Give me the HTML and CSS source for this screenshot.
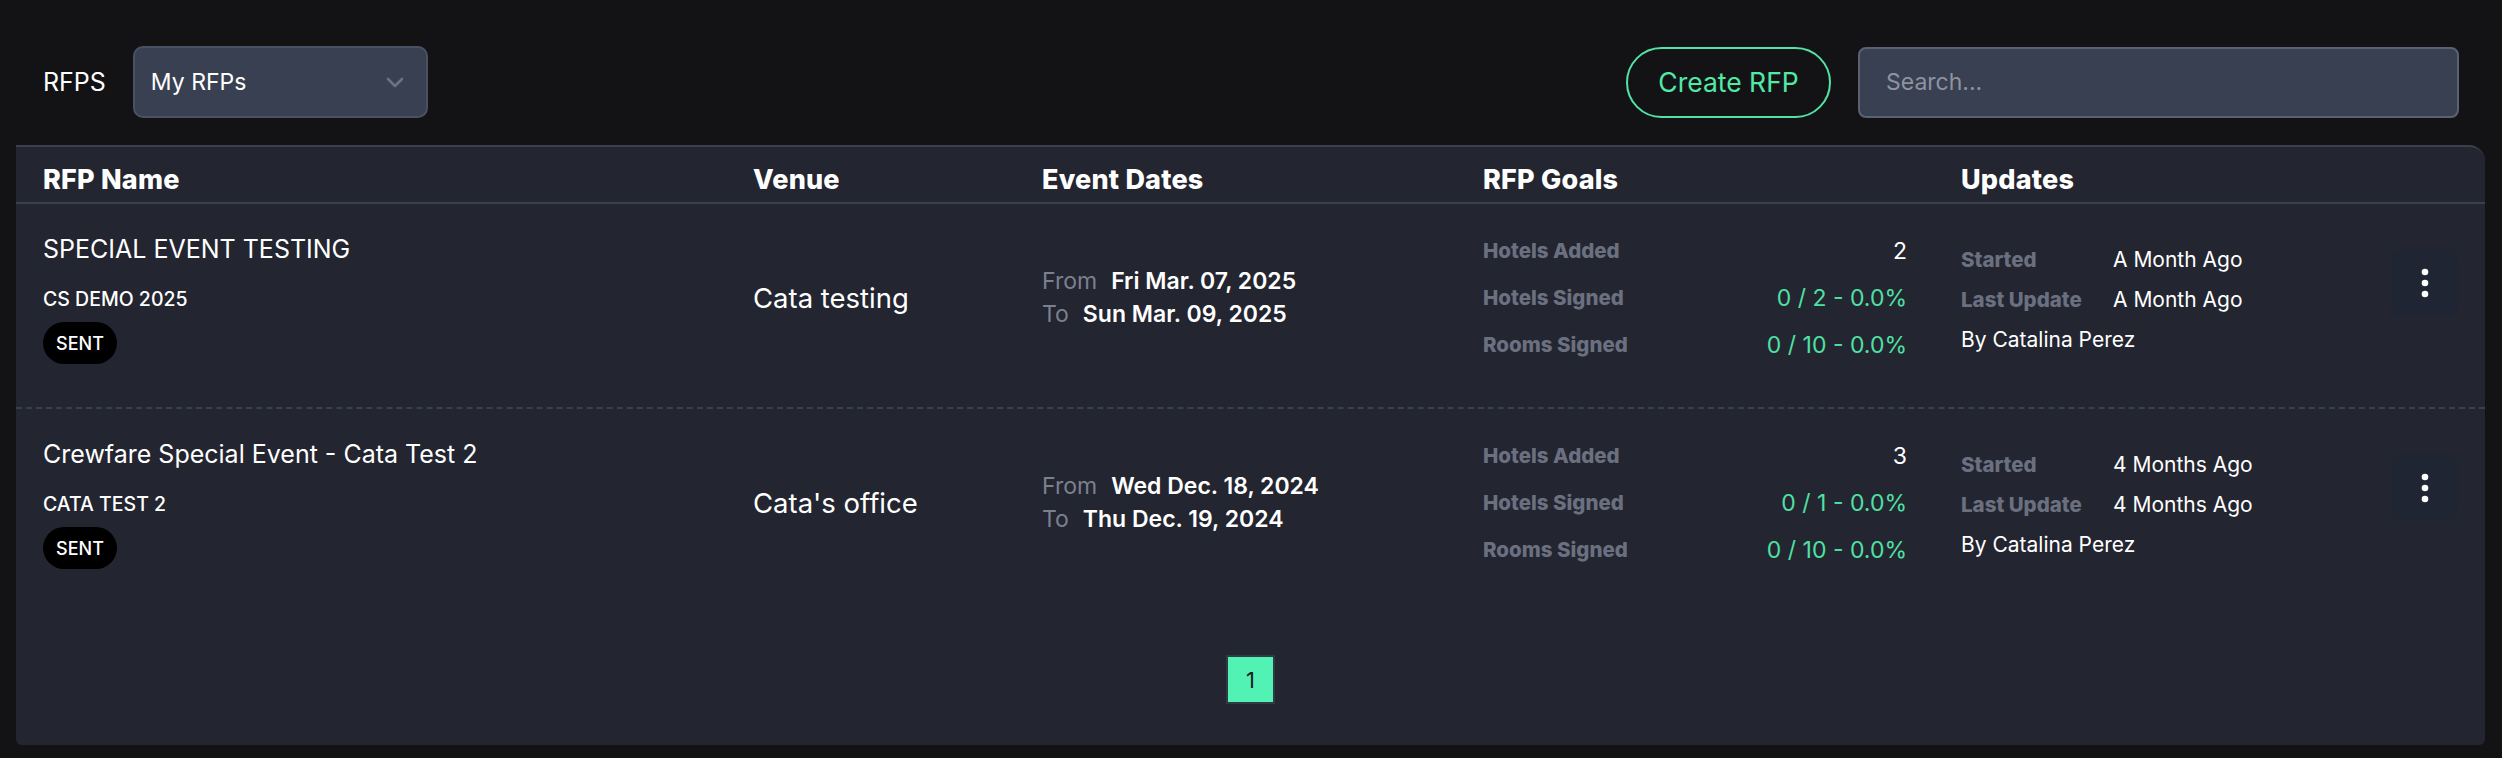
FILE: index.html
```html
<!DOCTYPE html>
<html lang="en">
<head>
    <meta charset="UTF-8">
    <meta name="viewport" content="width=device-width, initial-scale=1.0">
    <title>RFPs</title>
    <link rel="stylesheet" href="styles.css">
</head>
<body>
    <div class="page">
        <div class="toolbar">
            <div class="toolbar-left">
                <span class="toolbar-title">RFPS</span>
                <div class="select">
                    <span>My RFPs</span>
                    <svg class="chevron" width="18" height="11" viewBox="0 0 18 11">
                        <path d="M2 2 L9 9 L16 2" fill="none" stroke="#6b7280" stroke-width="2.6" stroke-linecap="round" stroke-linejoin="round"/>
                    </svg>
                </div>
            </div>
            <div class="toolbar-right">
                <button class="create-button">Create RFP</button>
                <input class="search" type="text" placeholder="Search...">
            </div>
        </div>

        <div class="table-card">
            <div class="table-head">
                <div>RFP Name</div>
                <div>Venue</div>
                <div>Event Dates</div>
                <div>RFP Goals</div>
                <div>Updates</div>
                <div></div>
            </div>

            <div class="table-body">
                <div class="table-row">
                    <div class="rfp-name">
                        <div class="rfp-title">SPECIAL EVENT TESTING</div>
                        <div class="rfp-code">CS DEMO 2025</div>
                        <span class="status-badge">SENT</span>
                    </div>
                    <div class="venue">Cata testing</div>
                    <div class="dates">
                        <div><span class="date-label">From</span><span class="date-value">Fri Mar. 07, 2025</span></div>
                        <div><span class="date-label">To</span><span class="date-value">Sun Mar. 09, 2025</span></div>
                    </div>
                    <div class="goals">
                        <div class="goal"><span class="goal-label">Hotels Added</span><span class="goal-value">2</span></div>
                        <div class="goal"><span class="goal-label">Hotels Signed</span><span class="goal-value green">0 / 2 - 0.0%</span></div>
                        <div class="goal"><span class="goal-label">Rooms Signed</span><span class="goal-value green">0 / 10 - 0.0%</span></div>
                    </div>
                    <div class="updates">
                        <span class="update-label">Started</span><span>A Month Ago</span>
                        <span class="update-label">Last Update</span><span>A Month Ago</span>
                        <span class="update-by">By Catalina Perez</span>
                    </div>
                    <button class="menu-button">
                        <svg width="10" height="30" viewBox="0 0 10 30">
                            <circle cx="5" cy="4" r="3.3" fill="#fff"/>
                            <circle cx="5" cy="15" r="3.3" fill="#fff"/>
                            <circle cx="5" cy="26" r="3.3" fill="#fff"/>
                        </svg>
                    </button>
                </div>

                <div class="table-row">
                    <div class="rfp-name">
                        <div class="rfp-title">Crewfare Special Event - Cata Test 2</div>
                        <div class="rfp-code">CATA TEST 2</div>
                        <span class="status-badge">SENT</span>
                    </div>
                    <div class="venue">Cata's office</div>
                    <div class="dates">
                        <div><span class="date-label">From</span><span class="date-value">Wed Dec. 18, 2024</span></div>
                        <div><span class="date-label">To</span><span class="date-value">Thu Dec. 19, 2024</span></div>
                    </div>
                    <div class="goals">
                        <div class="goal"><span class="goal-label">Hotels Added</span><span class="goal-value">3</span></div>
                        <div class="goal"><span class="goal-label">Hotels Signed</span><span class="goal-value green">0 / 1 - 0.0%</span></div>
                        <div class="goal"><span class="goal-label">Rooms Signed</span><span class="goal-value green">0 / 10 - 0.0%</span></div>
                    </div>
                    <div class="updates">
                        <span class="update-label">Started</span><span>4 Months Ago</span>
                        <span class="update-label">Last Update</span><span>4 Months Ago</span>
                        <span class="update-by">By Catalina Perez</span>
                    </div>
                    <button class="menu-button">
                        <svg width="10" height="30" viewBox="0 0 10 30">
                            <circle cx="5" cy="4" r="3.3" fill="#fff"/>
                            <circle cx="5" cy="15" r="3.3" fill="#fff"/>
                            <circle cx="5" cy="26" r="3.3" fill="#fff"/>
                        </svg>
                    </button>
                </div>
            </div>

            <div class="pagination">
                <span class="page-item active">1</span>
            </div>
        </div>
    </div>
</body>
</html>
```

FILE: styles.css
```css
* {
    margin: 0;
    padding: 0;
    box-sizing: border-box;
    font-family: 'Inter', 'Liberation Sans', sans-serif;
}

body {
    background-color: #131316;
    color: #fff;
    width: 2502px;
    height: 758px;
    overflow: hidden;
}

.page {
    padding: 46px 17px 0 16px;
}

/* top bar */
.toolbar {
    display: flex;
    justify-content: space-between;
    align-items: center;
    height: 72px;
    padding: 0 26px 0 27px;
    margin-bottom: 27px;
}

.toolbar-left,
.toolbar-right {
    display: flex;
    align-items: center;
}

.toolbar-left {
    gap: 27px;
}

.toolbar-right {
    gap: 27px;
}

.toolbar-title {
    font-size: 25px;
}

.select {
    width: 295px;
    height: 72px;
    display: flex;
    align-items: center;
    justify-content: space-between;
    padding: 0 22px 0 16px;
    background-color: #394051;
    border: 2px solid #4a5162;
    border-radius: 10px;
    font-size: 23px;
}

.create-button {
    width: 205px;
    height: 71px;
    background: transparent;
    border: 2px solid #52e3a4;
    border-radius: 36px;
    color: #52e8a8;
    font-size: 26.5px;
    cursor: pointer;
}

.search {
    width: 601px;
    height: 71px;
    padding: 0 26px;
    background-color: #394051;
    border: 2px solid #5a6172;
    border-radius: 8px;
    color: #fff;
    font-size: 23px;
}

.search::placeholder {
    color: #8d93a0;
}

.search:focus {
    outline: none;
}

/* table */
.table-card {
    background-color: #232530;
    border-top: 2px solid #3b404d;
    border-radius: 0 16px 6px 6px;
    height: 600px;
    padding: 0 27px;
}

.table-head,
.table-row {
    display: grid;
    grid-template-columns: 710px 289px 441px 478px 1fr 67px;
}

.table-head {
    height: 57px;
    align-items: center;
    border-bottom: 2px solid #3b404d;
    margin: 0 -27px;
    padding: 10px 27px 0;
    font-size: 27px;
    font-weight: 800;
    letter-spacing: 0.2px;
}

.table-row {
    align-items: center;
    padding: 27px 27px 43px;
    margin: 0 -27px;
    border-bottom: 2px dashed #3b404d;
}

.table-row:last-child {
    border-bottom: 2px solid transparent;
}

.rfp-title {
    font-size: 25px;
    line-height: 36px;
    margin-bottom: 16px;
}

.rfp-code {
    font-size: 19.5px;
    line-height: 32px;
    font-weight: 500;
    margin-bottom: 7px;
}

.status-badge {
    display: inline-flex;
    align-items: center;
    justify-content: center;
    width: 74px;
    height: 42px;
    background-color: #000;
    border-radius: 21px;
    font-size: 18px;
    font-weight: 500;
}

.venue {
    font-size: 27.5px;
}

.dates {
    font-size: 23px;
    line-height: 33px;
}

.date-label {
    color: #7b8091;
    margin-right: 14px;
}

.date-value {
    font-weight: 600;
}

.goals {
    width: 424px;
    display: flex;
    flex-direction: column;
    gap: 19px;
}

.goal {
    display: flex;
    justify-content: space-between;
    align-items: center;
    height: 28px;
}

.goal-label {
    color: #6b7080;
    font-size: 20.5px;
    font-weight: 800;
}

.goal-value {
    font-size: 23px;
}

.goal-value.green {
    color: #4fe0a4;
}

.updates {
    display: grid;
    grid-template-columns: 152px 1fr;
    row-gap: 10px;
    font-size: 21px;
    line-height: 30px;
    margin-top: 4px;
}

.update-label {
    color: #6b7080;
    font-weight: 800;
    font-size: 20.5px;
}

.update-by {
    grid-column: 1 / 3;
}

.menu-button {
    align-self: start;
    margin-top: 18px;
    width: 67px;
    height: 67px;
    display: flex;
    align-items: center;
    justify-content: center;
    background-color: #1f2533;
    border: none;
    border-radius: 12px;
    cursor: pointer;
}

.pagination {
    display: flex;
    justify-content: center;
    padding-top: 41px;
}

.page-item {
    width: 49px;
    height: 49px;
    display: flex;
    align-items: center;
    justify-content: center;
    font-size: 22px;
    color: #1a1d22;
    border: 2px solid #2e3b44;
}

.page-item.active {
    background-color: #52f2b4;
}
```
